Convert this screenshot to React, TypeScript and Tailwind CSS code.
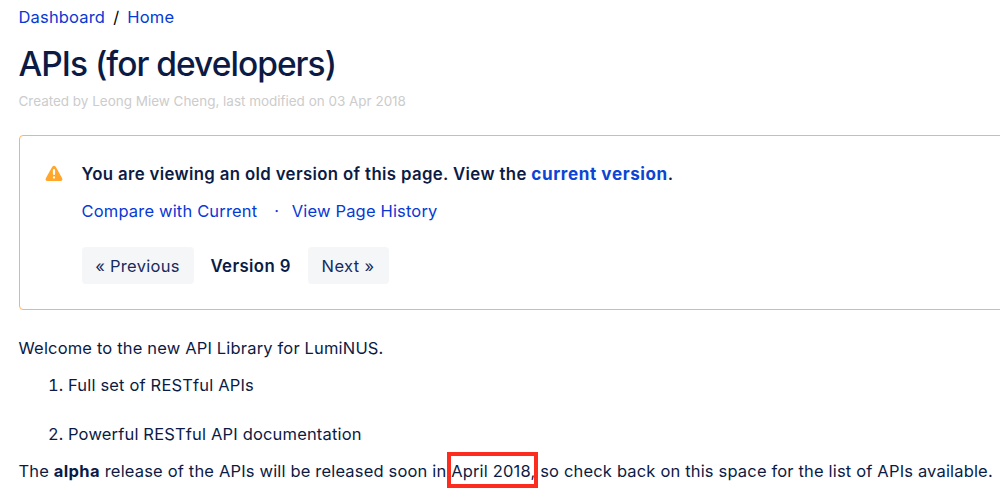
export default function App() {
  return (
    <main className="h-[503px] w-[1000px] overflow-hidden bg-white pl-[18.5px] font-['Inter',sans-serif] text-[16.5px] leading-[24px] tracking-[0.17px] text-[#0b1b45]">
      <nav className="flex h-[34px] items-center gap-2 whitespace-nowrap">
        <a className="text-[#0739d5]">Dashboard</a><span className="text-black">/</span><a className="text-[#0739d5]">Home</a>
      </nav>
      <h1 className="mt-[10px] whitespace-nowrap text-[33.5px] font-medium leading-[40px] tracking-[-0.98px]">APIs (for developers)</h1>
      <p className="mt-[7px] whitespace-nowrap text-[13.5px] leading-[20px] tracking-[-0.02px] text-[#cccccc]">Created by Leong Miew Cheng, last modified on 03 Apr 2018</p>
      <section className="mt-[24px] flex h-[175px] w-[990px] rounded-[4px] border border-[#ffb360] pl-[26px] pt-[26px]">
        <svg className="-ml-[0.5px] mr-[0.5px] mt-[3px] h-[17px] w-[18px] shrink-0" viewBox="0 0 18 17"><path d="M7.1 2.1Q9 -.5 10.9 2.1L17 12.9Q18.2 16 15.3 16H2.7Q-.2 16 1 12.9Z" fill="#ffa62b"/><path d="M9 5V9M9 12.4V12.6" stroke="white" strokeWidth="2.2" strokeLinecap="round"/></svg>
        <div className="ml-[18px] whitespace-nowrap">
          <p className="text-[16.8px] font-semibold tracking-[0.36px]">You are viewing an old version of this page. View the <a className="text-[17.1px] font-bold tracking-[0.58px] text-[#0c45d4]">current version</a>.</p>
          <p className="mt-[13px] flex text-[#0739d5]"><a>Compare with Current</a><span className="ml-[17px] mr-[12.5px]">·</span><a>View Page History</a></p>
          <div className="mt-[24px] flex h-[37px] items-center text-[#172b5d]"><a className="flex h-[37px] w-[112px] items-center justify-center rounded bg-[#f4f6f8] tracking-[0.3px]">« Previous</a><span className="ml-[17px] w-[97px] text-[16.8px] font-semibold tracking-[0.38px] text-[#0b1b45]">Version 9</span><a className="flex h-[37px] w-[81px] items-center justify-center rounded bg-[#f4f6f8] tracking-[0.35px]">Next »</a></div>
        </div>
      </section>
      <p className="mt-[26px]">Welcome to the new API Library for LumiNUS.</p>
      <ol className="mt-[13px] list-decimal pl-[49.5px]"><li>Full set of RESTful APIs</li><li className="mt-[25px]">Powerful RESTful API documentation</li></ol>
      <p className="relative mt-[13px] whitespace-nowrap">The <b className="font-bold tracking-[0.35px]">alpha</b> release of the APIs will be released soon in April 2018, so check back on this space for the list of APIs available.<span className="absolute left-[428.5px] top-[-7px] h-[36px] w-[91px] border-4 border-[#fc2c1e]" /></p>
    </main>
  );
}
